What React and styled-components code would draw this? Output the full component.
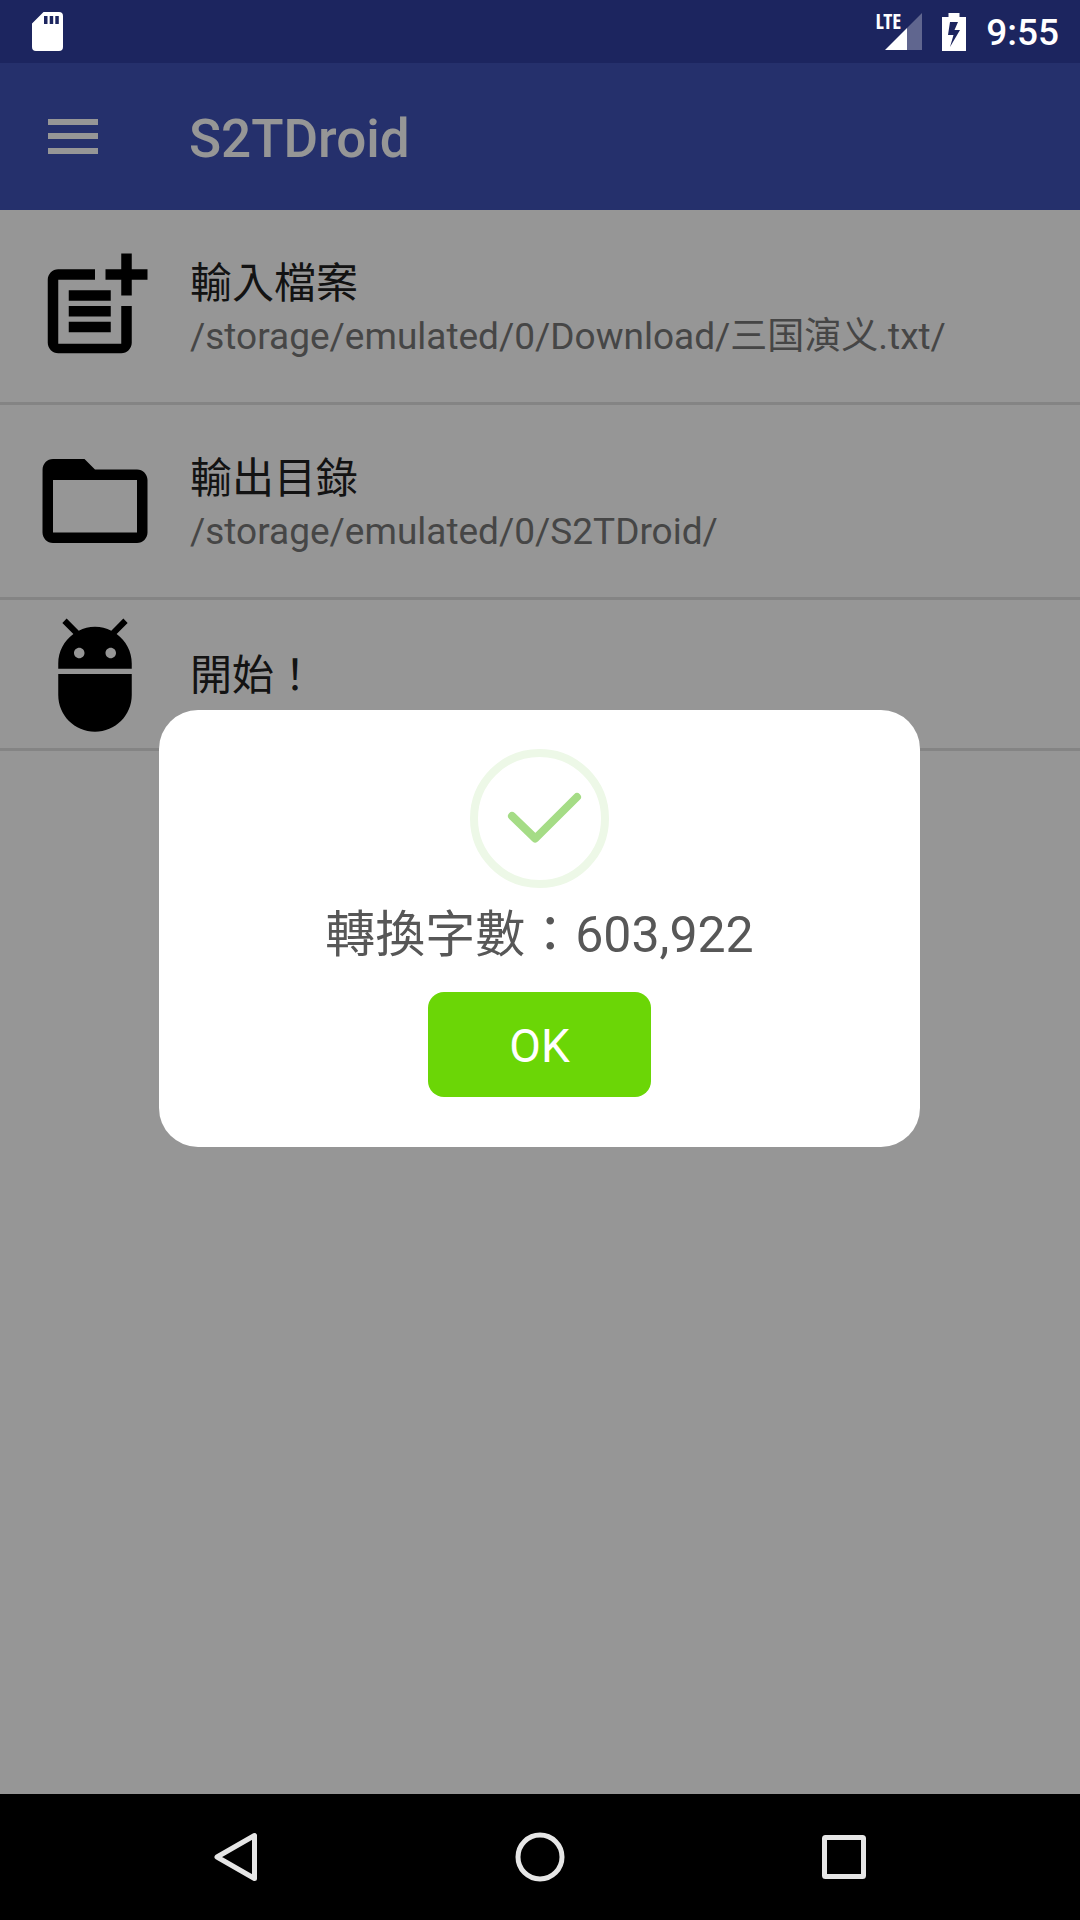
import React, { useState } from 'react';
import styled, { createGlobalStyle } from 'styled-components';
import { MdAdb, MdFolderOpen } from 'react-icons/md';

const MenuIcon = () => (
  <svg width="50" height="35" viewBox="0 0 50 35" fill="#fafafa">
    <rect width="50" height="6" />
    <rect y="14" width="50" height="6" />
    <rect y="29" width="50" height="6" />
  </svg>
);

const SdCardIcon = () => (
  <svg width="31" height="39" viewBox="0 0 31 39">
    <path
      fill="#fff"
      fillRule="evenodd"
      d="M11.5 0H27q4 0 4 4v31q0 4-4 4H4q-4 0-4-4V11.5zM12 4v8h3.500V4zM17.700 4v8h3.500V4zM23.300 4v8h3.500V4z"
    />
  </svg>
);

const SignalIcon = () => (
  <svg width="37" height="37" viewBox="0 0 37 37">
    <path fill="#fff" fillOpacity="0.3" d="M37 0v37H22V15z" />
    <path fill="#fff" d="M22 15v22H0z" />
  </svg>
);

const BatteryIcon = () => (
  <svg width="24" height="38" viewBox="0 0 24 38">
    <path
      fill="#fff"
      fillRule="evenodd"
      d="M6.500 0h11v4H24v34H0V4h6.500zM8 9L6 22h5.500L8 34l10-17h-5.500L16 9z"
    />
  </svg>
);

const PostAddIcon = () => (
  <svg width="126" height="126" viewBox="0 0 24 24">
    <path d="M12 5H5c-1.100 0-2 .9-2 2v12c0 1.100.9 2 2 2h12c1.100 0 2-.9 2-2v-7h-2v7.200H5V7h7zM19 2h-2v3h-3v2h3v3h2V7h3V5h-3zM7 9h8v2H7zM7 12h8v2H7zM7 15h8v2H7z" />
  </svg>
);

const SuccessIcon = () => (
  <svg width="139" height="139" viewBox="0 0 139 139" fill="none" strokeWidth="8">
    <circle cx="69.5" cy="69.5" r="65.5" stroke="#edf8e7" />
    <path
      d="M42 67L65.300 89.500L107 48"
      stroke="#a5dc86"
      strokeLinecap="round"
      strokeLinejoin="round"
    />
  </svg>
);

const items = [
  {
    id: 'input',
    icon: <PostAddIcon />,
    title: '輸入檔案',
    path: '/storage/emulated/0/Download/三国演义.txt/',
  },
  {
    id: 'output',
    icon: <MdFolderOpen size={126} />,
    title: '輸出目錄',
    path: '/storage/emulated/0/S2TDroid/',
  },
  { id: 'start', icon: <MdAdb size={126} />, title: '開始！' },
];

const App = () => {
  const [dialogOpen, setDialogOpen] = useState(true);

  return (
    <Screen>
      <GlobalStyle />
      <StatusBar>
        <StatusIcons>
          <SdCardIcon />
          <StatusGroup>
            <Signal>
              <Network>LTE</Network>
              <SignalIcon />
            </Signal>
            <BatteryIcon />
            <Clock>9:55</Clock>
          </StatusGroup>
        </StatusIcons>
      </StatusBar>
      <AppBar>
        <MenuBtn aria-label="Menu">
          <MenuIcon />
        </MenuBtn>
        <AppTitle>S2TDroid</AppTitle>
      </AppBar>
      <List>
        {items.map((it) => (
          <li key={it.id}>
            <Item $tall={Boolean(it.path)} onClick={() => setDialogOpen(it.id === 'start')}>
              {it.icon}
              <ItemText>
                <ItemTitle>{it.title}</ItemTitle>
                {it.path && <ItemPath>{it.path}</ItemPath>}
              </ItemText>
            </Item>
          </li>
        ))}
      </List>
      {dialogOpen && (
        <Backdrop>
          <Dialog role="dialog" aria-labelledby="result">
            <SuccessIcon />
            <DialogTitle id="result">轉換字數：603,922</DialogTitle>
            <OkBtn onClick={() => setDialogOpen(false)}>OK</OkBtn>
          </Dialog>
        </Backdrop>
      )}
      <NavBar>
        <NavBtn aria-label="Back">
          <svg width="50" height="50" viewBox="0 0 50 50">
            <path d="M43.500 3.500v43L6 25z" />
          </svg>
        </NavBtn>
        <NavBtn aria-label="Home">
          <svg width="50" height="50" viewBox="0 0 50 50">
            <circle cx="25" cy="25" r="22" />
          </svg>
        </NavBtn>
        <NavBtn aria-label="Recent apps">
          <svg width="50" height="50" viewBox="0 0 50 50">
            <rect x="5.500" y="5.500" width="39" height="39" rx="1" />
          </svg>
        </NavBtn>
      </NavBar>
    </Screen>
  );
};

export default App;

const GlobalStyle = createGlobalStyle`
  * {
    box-sizing: border-box;
  }
  body {
    margin: 0;
    font-family: Roboto, 'Noto Sans CJK TC', sans-serif;
  }
  button {
    border: 0;
    padding: 0;
    background: none;
    font-family: inherit;
    cursor: pointer;
  }
  svg {
    display: block;
    flex-shrink: 0;
  }
`;

const Screen = styled.div`
  position: relative;
  display: flex;
  flex-direction: column;
  min-height: 100vh;
  background-color: #fafafa;
`;

const StatusBar = styled.header`
  height: 63px;
  background-color: #303f9f;
`;

/* stays bright above the backdrop */
const StatusIcons = styled.div`
  position: relative;
  z-index: 2;
  display: flex;
  align-items: center;
  justify-content: space-between;
  height: 100%;
  padding: 0 21px 0 32px;
`;

const StatusGroup = styled.div`
  display: flex;
  align-items: center;
  gap: 20px;
`;

const Signal = styled.div`
  display: flex;
  align-items: flex-start;
`;

const Network = styled.span`
  margin-right: -16px;
  color: #fff;
  font-family: 'Open Sans Condensed', 'Liberation Sans Narrow', 'Open Sans', sans-serif;
  font-size: 21px;
  font-weight: 700;
  line-height: 16px;
`;

const Clock = styled.span`
  padding-top: 2px;
  color: #fff;
  font-size: 37px;
  font-weight: 500;
  line-height: 40px;
`;

const AppBar = styled.div`
  display: flex;
  align-items: center;
  gap: 91px;
  height: 147px;
  padding: 0 48px;
  background-color: #3f51b5;
`;

const MenuBtn = styled.button`
  width: 50px;
`;

const AppTitle = styled.h1`
  margin: 0;
  padding-top: 4px;
  color: #fafafa;
  font-size: 53px;
  font-weight: 500;
  line-height: 64px;
`;

const List = styled.ul`
  flex: 1;
  margin: 0;
  padding: 0;
  list-style: none;
`;

const Item = styled.button`
  display: flex;
  align-items: center;
  gap: 32px;
  width: 100%;
  padding: ${(props) => (props.$tall ? '33px 32px' : '11px 32px')};
  border-bottom: 3px solid #dcdcdc;
  color: #000;
  text-align: left;
`;

const ItemText = styled.div`
  display: flex;
  flex-direction: column;
  padding-top: 4px;
`;

const ItemTitle = styled.span`
  color: #212121;
  font-size: 42px;
  line-height: 58px;
`;

const ItemPath = styled.span`
  color: #757575;
  font-size: 37px;
  line-height: 48px;
`;

const Backdrop = styled.div`
  position: absolute;
  z-index: 1;
  top: 0;
  right: 0;
  bottom: 126px;
  left: 0;
  display: flex;
  align-items: center;
  justify-content: center;
  padding: 63px 160px 0 159px;
  background-color: rgba(0, 0, 0, 0.4);
`;

const Dialog = styled.div`
  display: flex;
  flex-direction: column;
  align-items: center;
  width: 100%;
  padding: 39px 39px 50px;
  border-radius: 39px;
  background-color: #fff;
`;

const DialogTitle = styled.h2`
  margin: 12px 0 22px;
  color: #575757;
  font-size: 50px;
  font-weight: 400;
  line-height: 70px;
`;

const OkBtn = styled.button`
  min-width: 223px;
  height: 105px;
  padding-top: 2px;
  border-radius: 16px;
  background-color: #6bd606;
  color: #fff;
  font-size: 46px;
`;

const NavBar = styled.nav`
  display: flex;
  height: 126px;
  padding: 0 84px;
  background-color: #000;
`;

const NavBtn = styled.button`
  flex: 1;
  display: flex;
  align-items: center;
  justify-content: center;

  svg {
    fill: none;
    stroke: #e6e6e6;
    stroke-width: 5;
    stroke-linejoin: round;
  }
`;
